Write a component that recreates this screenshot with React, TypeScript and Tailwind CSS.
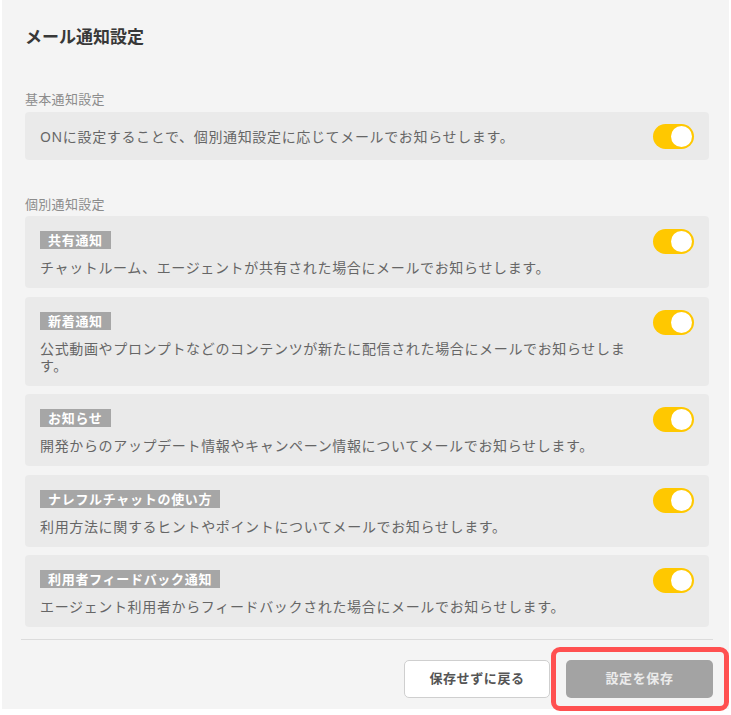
import React from 'react';

const font = "font-['Noto_Sans','Noto_Sans_CJK_JP',sans-serif]";

interface NoticeItem {
  tag: string;
  text: string;
}

const items: NoticeItem[] = [
  { tag: '共有通知', text: 'チャットルーム、エージェントが共有された場合にメールでお知らせします。' },
  { tag: '新着通知', text: '公式動画やプロンプトなどのコンテンツが新たに配信された場合にメールでお知らせします。' },
  { tag: 'お知らせ', text: '開発からのアップデート情報やキャンペーン情報についてメールでお知らせします。' },
  { tag: 'ナレフルチャットの使い方', text: '利用方法に関するヒントやポイントについてメールでお知らせします。' },
  { tag: '利用者フィードバック通知', text: 'エージェント利用者からフィードバックされた場合にメールでお知らせします。' },
];

const Toggle: React.FC = () => (
  <div className="w-[41px] h-[25px] shrink-0 rounded-full bg-[#ffc800] flex items-center justify-end pr-[2px]">
    <div className="w-[21px] h-[21px] rounded-full bg-white" />
  </div>
);

const SectionLabel: React.FC<{ children: React.ReactNode }> = ({ children }) => (
  <p className="text-[13px] leading-[20px] text-[#8c8c8c] tracking-[0.3px]">{children}</p>
);

export default function App() {
  return (
    <div className={`${font} bg-white w-[731px] h-[715px]`}>
      <div className="ml-[2px] w-[727px] h-[709px] bg-[#f4f4f4] flex flex-col">
        <div className="pl-[23px] pr-[20px] pt-[24px]">
          <h2 className="text-[17px] leading-[26px] font-bold text-[#383838]">メール通知設定</h2>

          <div className="mt-[39px]">
            <SectionLabel>基本通知設定</SectionLabel>
            <div className="mt-[3px] h-[48px] rounded-[4px] bg-[#eaeaea] flex items-center justify-between px-[15px]">
              <span className="text-[14px] tracking-[0.65px] text-[#666]">
                ONに設定することで、個別通知設定に応じてメールでお知らせします。
              </span>
              <Toggle />
            </div>
          </div>

          <div className="mt-[34px]">
            <SectionLabel>個別通知設定</SectionLabel>
            <div className="mt-[2px] flex flex-col gap-[8.5px]">
              {items.map((item) => (
                <div key={item.tag} className="rounded-[4px] bg-[#eaeaea] flex items-start gap-6 pl-[15px] pr-[15px] pt-[13px] pb-[12px]">
                  <div className="flex-1 flex flex-col items-start">
                    <span className="mt-[2px] h-[18px] leading-[18px] px-[8px] bg-[#a6a6a6] text-white text-[13px] font-bold tracking-[0.7px]">
                      {item.tag}
                    </span>
                    <p className="mt-[10px] text-[14px] leading-[17px] tracking-[0.65px] text-[#666]">{item.text}</p>
                  </div>
                  <Toggle />
                </div>
              ))}
            </div>
          </div>
        </div>

        <div className="mt-[12px] ml-[19px] mr-[16px] border-t border-[#dcdcdc]" />

        <div className="mt-[20px] mr-[16px] flex justify-end gap-[16px]">
          <button className="w-[146px] h-[38px] rounded-[5px] bg-white border border-[#cfcfcf] text-[13px] font-bold tracking-[0.6px] text-[#555]">
            保存せずに戻る
          </button>
          <div className="relative">
            <button className="w-[147px] h-[38px] rounded-[5px] bg-[#a3a3a3] text-[13px] font-bold tracking-[0.6px] text-[#ebebeb]">
              設定を保存
            </button>
            <div className="absolute -left-[15px] -right-[16px] -top-[13px] -bottom-[13px] border-[5px] border-[#ff5050] rounded-[9px] pointer-events-none" />
          </div>
        </div>
      </div>
    </div>
  );
}
